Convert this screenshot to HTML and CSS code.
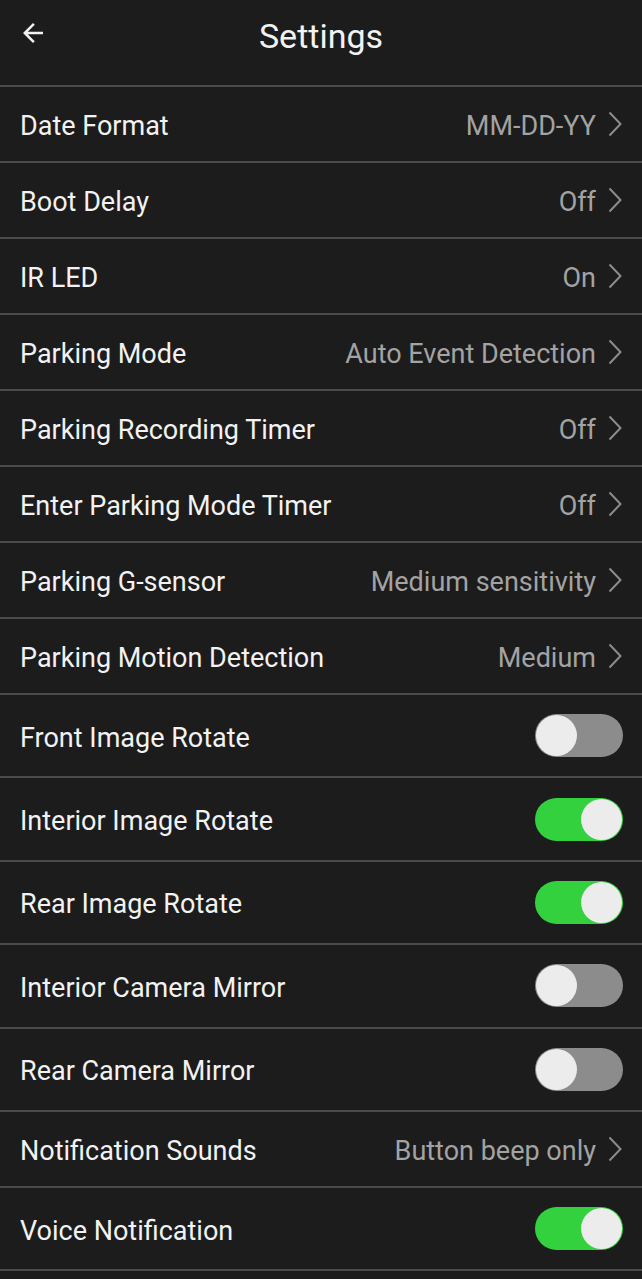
FILE: index.html
```html
<!DOCTYPE html>
<html lang="en">
<head>
<meta charset="UTF-8">
<meta name="viewport" content="width=device-width, initial-scale=1.0">
<title>Settings</title>
<link rel="stylesheet" href="styles.css">
</head>
<body>

<header class="topbar">
  <button class="back" aria-label="Back">
    <svg width="30" height="30" viewBox="0 0 24 24"><path d="M20 11H7.83l5.59-5.59L12 4l-8 8 8 8 1.41-1.41L7.83 13H20v-2z" fill="#f2f2f2"/></svg>
  </button>
  <h1>Settings</h1>
</header>

<ul class="settings">
  <li class="row">
    <span class="label">Date Format</span>
    <span class="value">MM-DD-YY</span>
    <svg class="chev" width="14" height="26" viewBox="0 0 14 26"><polyline points="1.5,1.5 12.5,13 1.5,24.5" fill="none" stroke="#8c8c8c" stroke-width="2"/></svg>
  </li>
  <li class="row">
    <span class="label">Boot Delay</span>
    <span class="value">Off</span>
    <svg class="chev" width="14" height="26" viewBox="0 0 14 26"><polyline points="1.5,1.5 12.5,13 1.5,24.5" fill="none" stroke="#8c8c8c" stroke-width="2"/></svg>
  </li>
  <li class="row">
    <span class="label">IR LED</span>
    <span class="value">On</span>
    <svg class="chev" width="14" height="26" viewBox="0 0 14 26"><polyline points="1.5,1.5 12.5,13 1.5,24.5" fill="none" stroke="#8c8c8c" stroke-width="2"/></svg>
  </li>
  <li class="row">
    <span class="label">Parking Mode</span>
    <span class="value">Auto Event Detection</span>
    <svg class="chev" width="14" height="26" viewBox="0 0 14 26"><polyline points="1.5,1.5 12.5,13 1.5,24.5" fill="none" stroke="#8c8c8c" stroke-width="2"/></svg>
  </li>
  <li class="row">
    <span class="label">Parking Recording Timer</span>
    <span class="value">Off</span>
    <svg class="chev" width="14" height="26" viewBox="0 0 14 26"><polyline points="1.5,1.5 12.5,13 1.5,24.5" fill="none" stroke="#8c8c8c" stroke-width="2"/></svg>
  </li>
  <li class="row">
    <span class="label">Enter Parking Mode Timer</span>
    <span class="value">Off</span>
    <svg class="chev" width="14" height="26" viewBox="0 0 14 26"><polyline points="1.5,1.5 12.5,13 1.5,24.5" fill="none" stroke="#8c8c8c" stroke-width="2"/></svg>
  </li>
  <li class="row">
    <span class="label">Parking G-sensor</span>
    <span class="value">Medium sensitivity</span>
    <svg class="chev" width="14" height="26" viewBox="0 0 14 26"><polyline points="1.5,1.5 12.5,13 1.5,24.5" fill="none" stroke="#8c8c8c" stroke-width="2"/></svg>
  </li>
  <li class="row">
    <span class="label">Parking Motion Detection</span>
    <span class="value">Medium</span>
    <svg class="chev" width="14" height="26" viewBox="0 0 14 26"><polyline points="1.5,1.5 12.5,13 1.5,24.5" fill="none" stroke="#8c8c8c" stroke-width="2"/></svg>
  </li>

  <li class="row row-switch">
    <span class="label">Front Image Rotate</span>
    <span class="switch"></span>
  </li>
  <li class="row row-switch">
    <span class="label">Interior Image Rotate</span>
    <span class="switch on"></span>
  </li>
  <li class="row row-switch">
    <span class="label">Rear Image Rotate</span>
    <span class="switch on"></span>
  </li>
  <li class="row row-switch">
    <span class="label">Interior Camera Mirror</span>
    <span class="switch"></span>
  </li>
  <li class="row row-switch">
    <span class="label">Rear Camera Mirror</span>
    <span class="switch"></span>
  </li>

  <li class="row">
    <span class="label">Notification Sounds</span>
    <span class="value">Button beep only</span>
    <svg class="chev" width="14" height="26" viewBox="0 0 14 26"><polyline points="1.5,1.5 12.5,13 1.5,24.5" fill="none" stroke="#8c8c8c" stroke-width="2"/></svg>
  </li>
  <li class="row row-switch">
    <span class="label">Voice Notification</span>
    <span class="switch on"></span>
  </li>
</ul>

</body>
</html>
```

FILE: styles.css
```css
body {
  margin: 0;
  background: #1c1c1c;
  color: #f2f2f2;
  font-family: Roboto, "Noto Sans", Arial, sans-serif;
}

.topbar {
  position: relative;
  height: 85px;
  display: flex;
  align-items: center;
  justify-content: center;
  border-bottom: 2px solid #4a4a4a;
}

.topbar h1 {
  margin: 0 0 14px;
  font-size: 34px;
  font-weight: 400;
}

/* back arrow sits over the bar, title stays centered */
.back {
  position: absolute;
  left: 18px;
  top: 18px;
  background: none;
  border: none;
  padding: 0;
  display: flex;
}

.settings {
  list-style: none;
  margin: 0;
  padding: 0;
}

.row {
  display: flex;
  align-items: center;
  height: 74px;
  padding: 0 20px 0 20px;
  border-bottom: 2px solid #4a4a4a;
}

.row-switch {
  height: 81.4px;
}

.label {
  flex: 1;
  font-size: 27px;
  padding-top: 4px;
}

.value {
  font-size: 27px;
  color: #a3a3a3;
  margin-right: 12px;
  padding-top: 4px;
}

.chev {
  display: block;
}

.switch {
  position: relative;
  width: 88px;
  height: 43px;
  border-radius: 22px;
  background: #8c8c8c;
  margin-right: -1px;
}

.switch::after {
  content: "";
  position: absolute;
  top: 1px;
  left: 1px;
  width: 41px;
  height: 41px;
  border-radius: 50%;
  background: #ececec;
}

.switch.on {
  background: #33d13d;
}

.switch.on::after {
  left: 46px;
}
```
